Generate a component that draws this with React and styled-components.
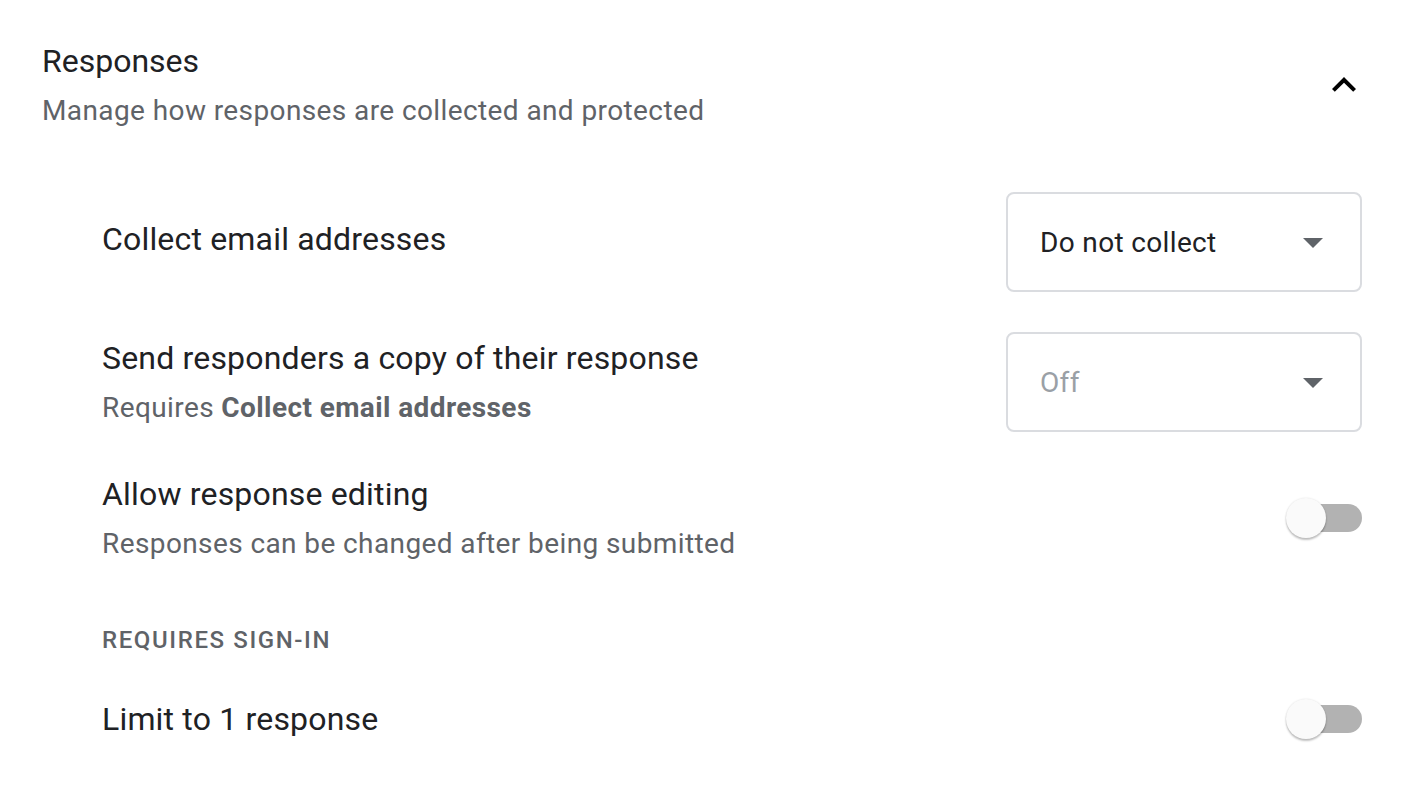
import React from "react";
import styled, { createGlobalStyle } from "styled-components";

const GlobalStyle = createGlobalStyle`
  html, body {
    margin: 0;
    padding: 0;
    background: #ffffff;
    font-family: Roboto, "Noto Sans", Arial, sans-serif;
    -webkit-font-smoothing: antialiased;
  }
`

const Page = styled.div`
  padding: 37px 54px 0 42px;
  width: 1416px;
  box-sizing: border-box;
`

const Header = styled.div`
  display: flex;
  align-items: center;
  justify-content: space-between;
  margin-right: -6px;
`

const Title = styled.div`
  font-size: 32px;
  line-height: 48px;
  color: #202124;
`

const Subtitle = styled.div`
  margin-top: 4px;
  font-size: 28px;
  line-height: 44px;
  color: #5f6368;
  letter-spacing: 0.4px;
`

const IconButton = styled.button`
  width: 48px;
  height: 48px;
  border: none;
  background: transparent;
  padding: 0;
  display: flex;
  align-items: center;
  justify-content: center;
  color: #000;
`

const Settings = styled.div`
  margin-left: 60px;
  margin-top: 59px;
  display: flex;
  flex-direction: column;
`

const Row = styled.div`
  display: flex;
  align-items: center;
  justify-content: space-between;
  margin-top: ${p => p.gap || 0}px;
`

const Texts = styled.div`
  display: flex;
  flex-direction: column;
`

const Label = styled.div`
  font-size: 32px;
  line-height: 52px;
  color: #202124;
  letter-spacing: 0.18px;
  margin-bottom: ${p => p.lift || 0}px;
`

const Hint = styled.div`
  font-size: 28px;
  line-height: 48px;
  color: #5f6368;
  letter-spacing: 0.4px;

  b {
    font-weight: 700;
  }
`

const SectionTitle = styled.div`
  font-size: 24px;
  line-height: 40px;
  font-weight: 500;
  letter-spacing: 1.6px;
  color: #5f6368;
  margin: 52px 0 33px;
`

const Select = styled.div`
  width: 356px;
  height: 100px;
  box-sizing: border-box;
  border: 2px solid #dadce0;
  border-radius: 8px;
  display: flex;
  align-items: center;
  justify-content: space-between;
  padding: 0 23px 0 32px;
  font-size: 28px;
  letter-spacing: 0.35px;
  color: ${p => (p.disabled ? "#9aa0a6" : "#202124")};
`

const Switch = styled.div`
  position: relative;
  width: 72px;
  height: 28px;
  border-radius: 14px;
  background: #b2b2b2;
`

const Thumb = styled.div`
  position: absolute;
  left: -4px;
  top: -6px;
  width: 40px;
  height: 40px;
  border-radius: 50%;
  background: #fafafa;
  box-shadow: 0 2px 2px rgba(0, 0, 0, 0.24), 0 0 2px rgba(0, 0, 0, 0.12);
`

function DropArrow() {
  return (
    <svg width="48" height="48" viewBox="0 0 24 24" fill="#5f6368">
      <path d="M7 10l5 5 5-5z" />
    </svg>
  )
}

function ChevronUp() {
  return (
    <svg width="48" height="48" viewBox="0 0 24 24" fill="#000">
      <path d="M12 8l-6 6 1.41 1.41L12 10.83l4.59 4.58L18 14z" />
    </svg>
  )
}

function Toggle() {
  return (
    <Switch>
      <Thumb />
    </Switch>
  )
}

export default function App() {
  return (
    <Page>
      <GlobalStyle />
      <Header>
        <div>
          <Title>Responses</Title>
          <Subtitle>Manage how responses are collected and protected</Subtitle>
        </div>
        <IconButton>
          <ChevronUp />
        </IconButton>
      </Header>
      <Settings>
        <Row>
          <Label lift={6}>Collect email addresses</Label>
          <Select>
            Do not collect
            <DropArrow />
          </Select>
        </Row>
        <Row gap={40}>
          <Texts>
            <Label>Send responders a copy of their response</Label>
            <Hint>Requires <b>Collect email addresses</b></Hint>
          </Texts>
          <Select disabled>
            Off
            <DropArrow />
          </Select>
        </Row>
        <Row gap={36}>
          <Texts>
            <Label>Allow response editing</Label>
            <Hint>Responses can be changed after being submitted</Hint>
          </Texts>
          <Toggle />
        </Row>
        <SectionTitle>REQUIRES SIGN-IN</SectionTitle>
        <Row>
          <Label>Limit to 1 response</Label>
          <Toggle />
        </Row>
      </Settings>
    </Page>
  )
}
